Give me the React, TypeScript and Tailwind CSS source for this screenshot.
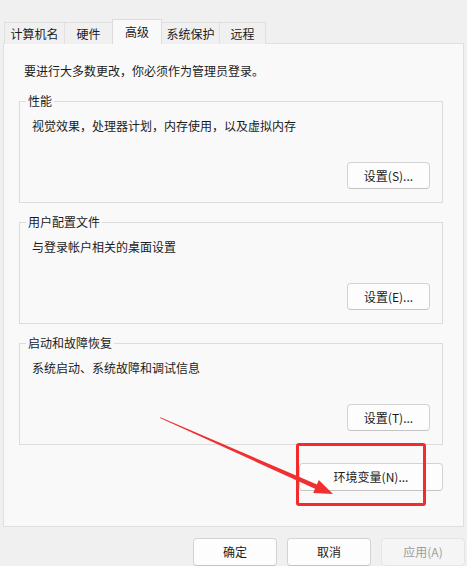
import React from "react";

const font = { fontFamily: '"Microsoft YaHei UI","Noto Sans CJK SC","Noto Sans",sans-serif' };

function Btn({ children, w = "w-[83px]", h = "h-[27px]", disabled = false }: { children: React.ReactNode; w?: string; h?: string; disabled?: boolean }) {
  return (
    <div
      className={`${w} ${h} flex items-center justify-center rounded-[4px] border text-[12px] leading-[16px] ${
        disabled
          ? "bg-[#f5f5f5] border-[#e5e5e5] text-[#9d9d9d]"
          : "bg-[#fdfdfd] border-[#d3d3d3] border-b-[#c4c4c4] text-[#1b1b1b]"
      }`}
    >
      {children}
    </div>
  );
}

function Group({ label, desc, btn }: { label: string; desc: string; btn: string }) {
  return (
    <div className="relative ml-[15px] w-[424px] h-[102px] border border-[#dcdcdc] flex flex-col pt-[16px] pb-[13px] px-[12px]">
      <span className="absolute left-[6px] top-[-9px] px-[2px] bg-[#f9f9f9] text-[12px] leading-[16px] text-[#1b1b1b]">
        {label}
      </span>
      <div className="text-[12px] leading-[16px] text-[#1b1b1b]">{desc}</div>
      <div className="mt-auto self-end">
        <Btn>{btn}</Btn>
      </div>
    </div>
  );
}

export default function App() {
  const tabs = ["计算机名", "硬件", "高级", "系统保护", "远程"];
  const widths = ["w-[61px]", "w-[49px]", "w-[50px]", "w-[59px]", "w-[47px]"];
  return (
    <div className="relative w-[467px] h-[566px] overflow-hidden bg-[#f0f0f0] pt-[19px]" style={font}>
      {/* tabs */}
      <div className="flex items-end h-[25px] pl-[4px]">
        {tabs.map((t, i) =>
          i === 2 ? (
            <div
              key={t}
              className={`${widths[i]} -ml-px relative z-10 h-[25px] bg-[#f9f9f9] border border-b-0 border-[#dcdcdc] flex items-start justify-center pt-[4px] text-[12px] leading-[16px] text-[#1b1b1b]`}
            >
              {t}
            </div>
          ) : (
            <div
              key={t}
              className={`${widths[i]} ${i === 0 ? "" : "-ml-px"} h-[22px] bg-[#f0f0f0] border border-b-0 border-[#e0e0e0] flex items-center justify-center text-[12px] leading-[16px] text-[#1b1b1b]`}
            >
              {t}
            </div>
          )
        )}
      </div>
      {/* panel */}
      <div className="ml-[3px] -mt-px w-[461px] h-[484px] border border-[#dfdfdf] bg-[#f9f9f9] flex flex-col">
        <div className="mt-[19px] pl-[20px] text-[12px] leading-[16px] text-[#1b1b1b]">
          要进行大多数更改，你必须作为管理员登录。
        </div>
        <div className="mt-[22px]">
          <Group label="性能" desc="视觉效果，处理器计划，内存使用，以及虚拟内存" btn="设置(S)..." />
        </div>
        <div className="mt-[19px]">
          <Group label="用户配置文件" desc="与登录帐户相关的桌面设置" btn="设置(E)..." />
        </div>
        <div className="mt-[19px]">
          <Group label="启动和故障恢复" desc="系统启动、系统故障和调试信息" btn="设置(T)..." />
        </div>
        <div className="mt-[18px] self-end mr-[20px]">
          <Btn w="w-[144px]" h="h-[28px]">环境变量(N)...</Btn>
        </div>
      </div>
      {/* bottom buttons */}
      <div className="mt-[11px] flex justify-end gap-[10px] pr-[2px]">
        <Btn w="w-[84px]" h="h-[28px]">确定</Btn>
        <Btn w="w-[84px]" h="h-[28px]">取消</Btn>
        <Btn w="w-[84px]" h="h-[28px]" disabled>
          应用(A)
        </Btn>
      </div>

      {/* annotation: red box */}
      <div className="absolute left-[296px] top-[443px] w-[130px] h-[63px] border-[3px] border-[#f52a2a] rounded-[3px]" />
      {/* annotation: arrow */}
      <svg className="absolute left-0 top-0" width="467" height="566" viewBox="0 0 467 566">
        <polygon points="160,418 160.4,417.2 318.8,485.2 317.2,489.8" fill="#f03030" />
        <polygon points="333,494 313.2,492.9 318.8,480.1" fill="#f03030" />
      </svg>
    </div>
  );
}
